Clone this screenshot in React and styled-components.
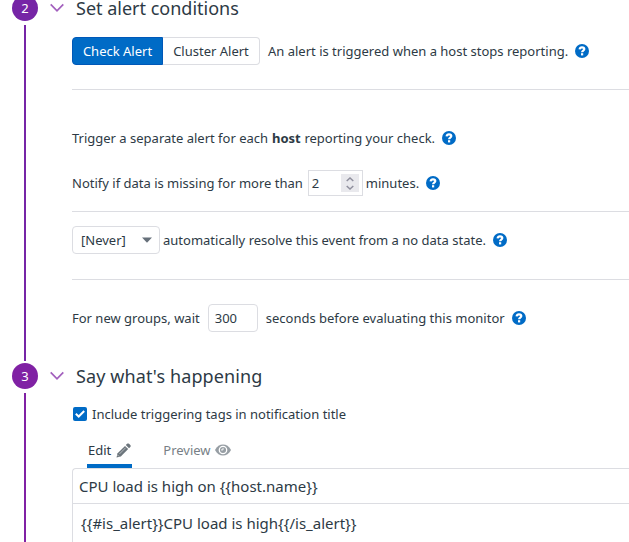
import React from 'react'
// Styled component
import styled, { createGlobalStyle } from 'styled-components'

// =============================================================================
const GlobalStyle = createGlobalStyle`
  * { box-sizing: border-box; }
  body {
    margin: 0;
    background: #fff;
    color: #2d3a45;
    font-family: 'Noto Sans', sans-serif;
    font-size: 13px;
    line-height: 18px;
    overflow: hidden;
  }
`;

const Page = styled.main`
  height: 542px;
  overflow: hidden;
  padding-left: 12px;
`;

const Step = styled.section`
  display: flex;
  height: ${(p) => p.$height}px;
  margin-top: ${(p) => p.$offset || 0}px;
`;

const Rail = styled.div`
  flex: none;
  width: 26px;
  display: flex;
  flex-direction: column;
  align-items: center;
`;

const StepNumber = styled.div`
  flex: none;
  width: 26px;
  height: 26px;
  border-radius: 50%;
  background: ${(p) => p.$color};
  color: #fff;
  text-align: center;
  line-height: 26px;
`;

const Line = styled.div`
  flex: 1;
  width: 2px;
  margin: 4px 0 2px;
  background: ${(p) => p.$color};
`;

const Body = styled.div`
  flex: 1;
  min-width: 0;
  padding-left: 12px;
`;

const Header = styled.header`
  display: flex;
  align-items: center;
  height: 26px;
`;

const Title = styled.h2`
  margin: 0 0 0 12px;
  font-size: 18px;
  font-weight: 400;
  line-height: 16px;
  letter-spacing: ${(p) => p.$tracking || 0}px;
`;

const Content = styled.div`
  padding-left: 22px;
`;

const Row = styled.div`
  display: flex;
  align-items: center;
  height: 28px;
  margin-top: ${(p) => p.$top}px;
  white-space: pre;
`;

const Divider = styled.hr`
  height: 1px;
  margin: ${(p) => p.$top}px 0 0;
  border: 0;
  background: #dcdde2;
`;

const ToggleButton = styled.button`
  height: 28px;
  width: ${(p) => p.$width}px;
  padding: 0;
  border: 1px solid ${(p) => (p.$active ? '#0058b8' : '#dcdde2')};
  border-left-width: ${(p) => (p.$active ? 1 : 0)}px;
  border-radius: ${(p) => (p.$active ? '4px 0 0 4px' : '0 4px 4px 0')};
  background: ${(p) => (p.$active ? '#006bc6' : '#fff')};
  color: ${(p) => (p.$active ? '#fff' : 'inherit')};
  font: inherit;
`;

const Text = styled.span`
  margin-left: ${(p) => p.$left || 0}px;
`;

const Bold = styled.b`
  margin: 0 .3px 0 .5px;
`;

const Field = styled.div`
  display: flex;
  align-items: center;
  width: ${(p) => p.$width}px;
  height: 28px;
  margin-left: ${(p) => p.$left || 0}px;
  padding-left: ${(p) => p.$pad}px;
  border: 1px solid #dcdde2;
  border-radius: 4px;
`;

const NumberField = styled(Field)`
  height: 26px;
  justify-content: space-between;
  padding-right: 3px;
  border-radius: 0;
`;

const Spinner = styled.span`
  display: flex;
  align-items: center;
  justify-content: center;
  width: 18px;
  height: 18px;
  background: #e9e9ed;
`;

const Caret = styled.svg`
  margin-left: auto;
  margin-right: 7px;
`;

const HelpSvg = styled.svg`
  flex: none;
  margin-left: 7px;
`;

const CheckBox = styled.span`
  display: flex;
  align-items: center;
  justify-content: center;
  width: 14px;
  height: 14px;
  margin: 0 5px 0 1px;
  border-radius: 2px;
  background: #006bc6;
`;

const Tabs = styled.nav`
  display: flex;
  gap: 30px;
  height: 32px;
  margin-top: 8px;
  padding-left: 15px;
`;

const Tab = styled.div`
  display: flex;
  align-items: center;
  gap: ${(p) => p.$gap}px;
  height: 32px;
  padding: 0 1px;
  border-bottom: 4px solid ${(p) => (p.$active ? '#006bc6' : 'transparent')};
  color: ${(p) => (p.$active ? 'inherit' : '#787f86')};
`;

const Editor = styled.div`
  height: 100px;
  border: 1px solid #dcdde2;
  border-right: 0;
  border-radius: 4px 0 0 0;
  font-size: 15px;
`;

const EditorLine = styled.div`
  height: ${(p) => p.$height}px;
  padding-left: ${(p) => p.$pad}px;
  border-bottom: ${(p) => (p.$ruled ? '1px solid #dcdde2' : '0')};
  line-height: ${(p) => p.$leading}px;
`;

// Icons
const Chevron = () => (
  <svg width="14" height="10" viewBox="0 0 14 10" fill="none" stroke="#a25fbd" strokeWidth="1.7">
    <path d="M.7 1.3 7 7.8l6.3-6.5" />
  </svg>
);

const Help = () => (
  <HelpSvg width="14" height="14" viewBox="0 0 14 14">
    <circle cx="7" cy="7" r="7" fill="#006bc6" />
    <path d="M4.6 5.300C4.800 4 5.700 3.300 7 3.300c1.400 0 2.300.7 2.300 1.800 0 1.500-2.200 1.500-2.200 3.200" fill="none" stroke="#fff" strokeWidth="2.200" />
    <rect x="6" y="9.200" width="2.200" height="2.200" fill="#fff" />
  </HelpSvg>
);

const Pencil = () => (
  <svg width="15" height="15" viewBox="0 0 15 15" fill="#6c757c">
    <path d="M.5 14.500 1.600 10.300 9 2.900l3.200 3.200-7.400 7.400z" />
    <path d="m9.800 2.100 1.300-1.300c.6-.6 1.300-.5 1.900 0l1.300 1.300c.6.6.6 1.300 0 1.900L13 5.300z" />
    <path d="m3.400 11 6.300-6.300" fill="none" stroke="#fff" strokeWidth=".5" />
    <path d="m1.700 12.200 1.100 1.100" fill="none" stroke="#fff" strokeWidth=".7" />
  </svg>
);

const Eye = () => (
  <svg width="16" height="12" viewBox="0 0 16 12">
    <path d="M0 6C2 2.300 4.700.5 8 .5S14 2.300 16 6c-2 3.700-4.700 5.500-8 5.500S2 9.700 0 6z" fill="#979ea4" />
    <circle cx="8" cy="6" r="3.700" fill="none" stroke="#fff" strokeWidth="1.300" />
    <path d="M8 3.900v2H6" fill="none" stroke="#fff" strokeWidth=".9" />
  </svg>
);

// ==============================================================================
const App = () => {
  return (
    <>
      <GlobalStyle />
      <Page>
        <Step $height={368} $offset={-5}>
          <Rail>
            <StepNumber $color="#7625a6">2</StepNumber>
            <Line $color="#7625a6" />
          </Rail>
          <Body>
            <Header>
              <Chevron />
              <Title>Set alert conditions</Title>
            </Header>
            <Content>
              <Row $top={16}>
                <ToggleButton $active $width={91}>Check Alert</ToggleButton>
                <ToggleButton $width={97}>Cluster Alert</ToggleButton>
                <Text $left={8}>An alert is triggered when a host stops reporting.</Text>
                <Help />
              </Row>
              <Divider $top={24} />
              <Row $top={34}>
                <Text>Trigger a separate alert for each <Bold>host</Bold> reporting your check.</Text>
                <Help />
              </Row>
              <Row $top={17}>
                <Text>Notify if data is missing for more than</Text>
                <NumberField $width={55} $left={5} $pad={3}>
                  2
                  <Spinner>
                    <svg width="8" height="13" viewBox="0 0 8 13" fill="none" stroke="#8f8f9d" strokeWidth="1.500">
                      <path d="m.7 4 3.300-3 3.300 3M.7 9 4 12l3.300-3" />
                    </svg>
                  </Spinner>
                </NumberField>
                <Text $left={3}>minutes.</Text>
                <Help />
              </Row>
              <Divider $top={14} />
              <Row $top={14}>
                <Field $width={88} $pad={8}>
                  [Never]
                  <Caret width="10" height="6" viewBox="0 0 10 6">
                    <path d="M0 .5h10L5 5.800z" fill="#66707a" />
                  </Caret>
                </Field>
                <Text $left={3}>automatically resolve this event from a no data state.</Text>
                <Help />
              </Row>
              <Divider $top={25} />
              <Row $top={24}>
                <Text>For new groups, wait</Text>
                <Field $width={50} $left={8} $pad={6}>300</Field>
                <Text $left={8}>seconds before evaluating this monitor</Text>
                <Help />
              </Row>
            </Content>
          </Body>
        </Step>

        <Step $height={200}>
          <Rail>
            <StepNumber $color="#8021a4">3</StepNumber>
            <Line $color="#8021a4" />
          </Rail>
          <Body>
            <Header>
              <Chevron />
              <Title $tracking={0.1}>Say what's happening</Title>
            </Header>
            <Content>
              <Row $top={11}>
                <CheckBox>
                  <svg width="10" height="8" viewBox="0 0 10 8" fill="none" stroke="#fff" strokeWidth="2">
                    <path d="m.8 3.700 2.900 2.800L9.200 1" />
                  </svg>
                </CheckBox>
                <Text>Include triggering tags in notification title</Text>
              </Row>
              <Tabs>
                <Tab $active $gap={5}>Edit <Pencil /></Tab>
                <Tab $gap={4}>Preview <Eye /></Tab>
              </Tabs>
              <Editor>
                <EditorLine $height={35} $leading={35} $pad={6} $ruled>{'CPU load is high on {{host.name}}'}</EditorLine>
                <EditorLine $height={39} $leading={39} $pad={8}>{'{{#is_alert}}CPU load is high{{/is_alert}}'}</EditorLine>
              </Editor>
            </Content>
          </Body>
        </Step>
      </Page>
    </>
  )
}

export default App
